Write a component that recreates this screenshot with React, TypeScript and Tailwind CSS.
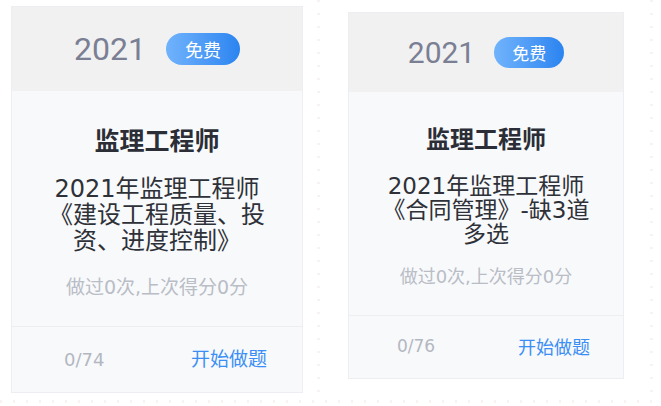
type CardProps = {
  count: string
  lines: string[]
  big?: boolean
}

const font = { fontFamily: '"DejaVu Sans", "Noto Sans CJK SC", sans-serif' }

function ExamCard({ count, lines, big }: CardProps) {
  return (
    <div
      className={
        big
          ? 'w-[292px] h-[387px] flex flex-col border border-[#eceef1] bg-[#f8f9fb]'
          : 'w-[276px] h-[367px] flex flex-col border border-[#eceef1] bg-[#f8f9fb]'
      }
      style={font}
    >
      <div
        className={
          big
            ? 'h-[84px] bg-[#f1f1f1] flex items-center justify-center gap-[20px]'
            : 'h-[79px] bg-[#f1f1f1] flex items-center justify-center gap-[19px]'
        }
      >
        <span
          className={big ? 'text-[32px] text-[#7a7f94] leading-none' : 'text-[30px] text-[#7a7f94] leading-none'}
          style={{ fontFamily: 'Roboto, sans-serif' }}
        >
          2021
        </span>
        <span
          className={
            big
              ? 'w-[74px] h-[32px] rounded-full bg-linear-to-r from-[#70b3fc] to-[#2a84f0] text-white text-[18px] flex items-center justify-center'
              : 'w-[70px] h-[31px] rounded-full bg-linear-to-r from-[#70b3fc] to-[#2a84f0] text-white text-[17px] flex items-center justify-center'
          }
          style={{ fontFamily: '"Noto Sans CJK SC", sans-serif' }}
        >
          免费
        </span>
      </div>
      <div className={big ? 'flex-1 flex flex-col items-center px-[35px] pt-[32px]' : 'flex-1 flex flex-col items-center px-[31px] pt-[30px]'}>
        <div
          className={big ? 'text-[25px] leading-[32px] font-bold text-[#2b2e36]' : 'text-[24px] leading-[32px] font-bold text-[#2b2e36]'}
          style={{ fontFamily: '"Noto Sans CJK SC", sans-serif' }}
        >
          监理工程师
        </div>
        <div
          className={
            big
              ? 'mt-[21px] w-full text-center text-[24px] leading-[26px] text-[#2e3138]'
              : 'mt-[20px] w-full text-center text-[23px] leading-[24px] text-[#2e3138]'
          }
        >
          {lines.join('')}
        </div>
        <div className={big ? 'mt-[21px] text-[19px] leading-[24px] text-[#b9bdc6]' : 'mt-[19px] text-[18px] leading-[24px] text-[#b9bdc6]'}>
          做过0次,上次得分0分
        </div>
      </div>
      <div
        className={
          big
            ? 'h-[66px] border-t border-[#eceef1] flex items-center justify-between pl-[52px] pr-[35px]'
            : 'h-[63px] border-t border-[#eceef1] flex items-center justify-between pl-[48px] pr-[33px]'
        }
      >
        <span className={big ? 'text-[18px] text-[#b3b7c1]' : 'text-[17px] text-[#b3b7c1]'}>{count}</span>
        <span className={big ? 'text-[19px] text-[#3b8ef5]' : 'text-[18px] text-[#3b8ef5]'}>开始做题</span>
      </div>
    </div>
  )
}

function VLine() {
  return <div className="w-[3px] self-stretch bg-[repeating-linear-gradient(to_bottom,#f8f3f2_0px,#f8f3f2_2px,transparent_2px,transparent_13px)]" />
}

export default function App() {
  return (
    <div className="w-[661px] h-[406px] bg-white overflow-hidden">
      <div className="flex h-[400px]">
        <div className="w-[317px] pl-[11px] pt-[6px]">
          <ExamCard big count="0/74" lines={['2021年监理工程师', '《建设工程质量、投资、进度控制》']} />
        </div>
        <VLine />
        <div className="w-[330px] pl-[28px] pt-[12px]">
          <ExamCard count="0/76" lines={['2021年监理工程师', '《合同管理》-缺3道多选']} />
        </div>
        <VLine />
      </div>
      <div className="h-[3px] bg-[repeating-linear-gradient(to_right,#f8f3f2_0px,#f8f3f2_2px,transparent_2px,transparent_13px)]" />
    </div>
  )
}
